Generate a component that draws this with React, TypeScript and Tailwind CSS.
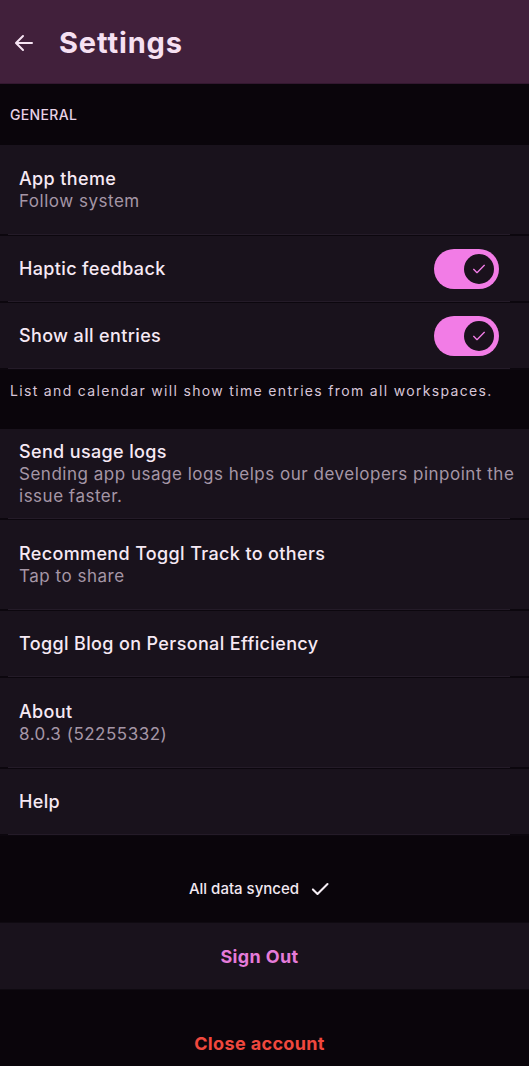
import type React from "react";

type Row = {
  id: string;
  title: string;
  subtitle?: string;
  toggle?: boolean;
};

const generalRows: Row[] = [
  { id: "theme", title: "App theme", subtitle: "Follow system" },
  { id: "haptic", title: "Haptic feedback", toggle: true },
  { id: "entries", title: "Show all entries", toggle: true },
];

const otherRows: Row[] = [
  {
    id: "logs",
    title: "Send usage logs",
    subtitle:
      "Sending app usage logs helps our developers pinpoint the issue faster.",
  },
  { id: "recommend", title: "Recommend Toggl Track to others", subtitle: "Tap to share" },
  { id: "blog", title: "Toggl Blog on Personal Efficiency" },
  { id: "about", title: "About", subtitle: "8.0.3 (52255332)" },
  { id: "help", title: "Help" },
];

const Toggle: React.FC = () => (
  <div className="flex h-[40px] w-[65px] items-center justify-end rounded-full bg-[#f27ce6] pr-[5px]">
    <div className="flex h-[30px] w-[30px] items-center justify-center rounded-full bg-[#1a111c]">
      <svg width="16" height="16" viewBox="0 0 24 24" fill="none">
        <path
          d="M4 12.5l5 5L20 6.5"
          stroke="#f27ce6"
          strokeWidth="2"
          strokeLinecap="round"
          strokeLinejoin="round"
        />
      </svg>
    </div>
  </div>
);

const Divider: React.FC = () => (
  <div className="h-[2px] bg-[#0c070e]">
    <div className="ml-2 mr-[19px] h-px bg-[#241b28]" />
  </div>
);

const SettingsRow: React.FC<{ row: Row }> = ({ row }) => (
  <div
    className={`flex items-center justify-between bg-[#19121c] pl-[19px] pr-[30px] ${
      row.subtitle ? "h-[89px]" : "h-[65px]"
    }`}
  >
    <div className="flex flex-col">
      <span className="text-[18px] leading-[23px] font-medium tracking-[0.02em] text-[#f6e9f4]">
        {row.title}
      </span>
      {row.subtitle && (
        <span className="-mr-[16px] text-[17px] leading-[22px] tracking-[0.03em] text-[#a596a6]">
          {row.subtitle}
        </span>
      )}
    </div>
    {row.toggle && <Toggle />}
  </div>
);

const Section: React.FC<{ rows: Row[] }> = ({ rows }) => (
  <div className="flex flex-col">
    {rows.map((row, i) => (
      <div key={row.id}>
        {i > 0 && <Divider />}
        <SettingsRow row={row} />
      </div>
    ))}
    <Divider />
  </div>
);

export default function App() {
  return (
    <div
      className="flex min-h-[1066px] w-full flex-col bg-[#0a050b]"
      style={{ fontFamily: "Inter, 'Noto Sans', sans-serif" }}
    >
      {/* header */}
      <header className="flex h-[84px] items-center gap-[23px] border-b border-[#331830] bg-[#41203b] px-[12px] pt-[3px]">
        <svg width="24" height="24" viewBox="0 0 24 24" fill="none">
          <path
            d="M20 12H4.5M11 5l-7 7 7 7"
            stroke="#f6e4f3"
            strokeWidth="2"
            strokeLinecap="round"
            strokeLinejoin="round"
          />
        </svg>
        <h1 className="text-[29px] font-bold tracking-[0.03em] text-[#f6e0f2]">
          Settings
        </h1>
      </header>

      <div className="flex h-[61px] items-center px-[10px]">
        <span className="text-[14px] font-medium tracking-wide text-[#e8d2e6]">
          GENERAL
        </span>
      </div>

      <Section rows={generalRows} />

      <div className="flex h-[59px] items-start px-[10px] pt-[10px]">
        <span className="text-[14px] tracking-[0.095em] text-[#d8c5d8]">
          List and calendar will show time entries from all workspaces.
        </span>
      </div>

      <Section rows={otherRows} />

      <div className="flex h-[86px] items-center justify-center gap-[11px] pr-[10px] pt-[20px]">
        <span className="text-[15px] font-medium text-[#f2e8f1]">
          All data synced
        </span>
        <svg width="20" height="20" viewBox="0 0 24 24" fill="none">
          <path
            d="M3.5 12.5l5.5 5.5L21 6"
            stroke="#f6eef5"
            strokeWidth="2.5"
            strokeLinecap="round"
            strokeLinejoin="round"
          />
        </svg>
      </div>

      <div className="flex h-[68px] items-center justify-center border-y border-[#0f0a11] bg-[#19121c] pr-[10px]">
        <span className="text-[18px] font-bold tracking-[0.02em] text-[#e57bd9]">
          Sign Out
        </span>
      </div>

      <div className="flex h-[106px] items-center justify-center pr-[10px]">
        <span className="text-[18px] font-bold tracking-[0.02em] text-[#f0483e]">
          Close account
        </span>
      </div>
    </div>
  );
}
